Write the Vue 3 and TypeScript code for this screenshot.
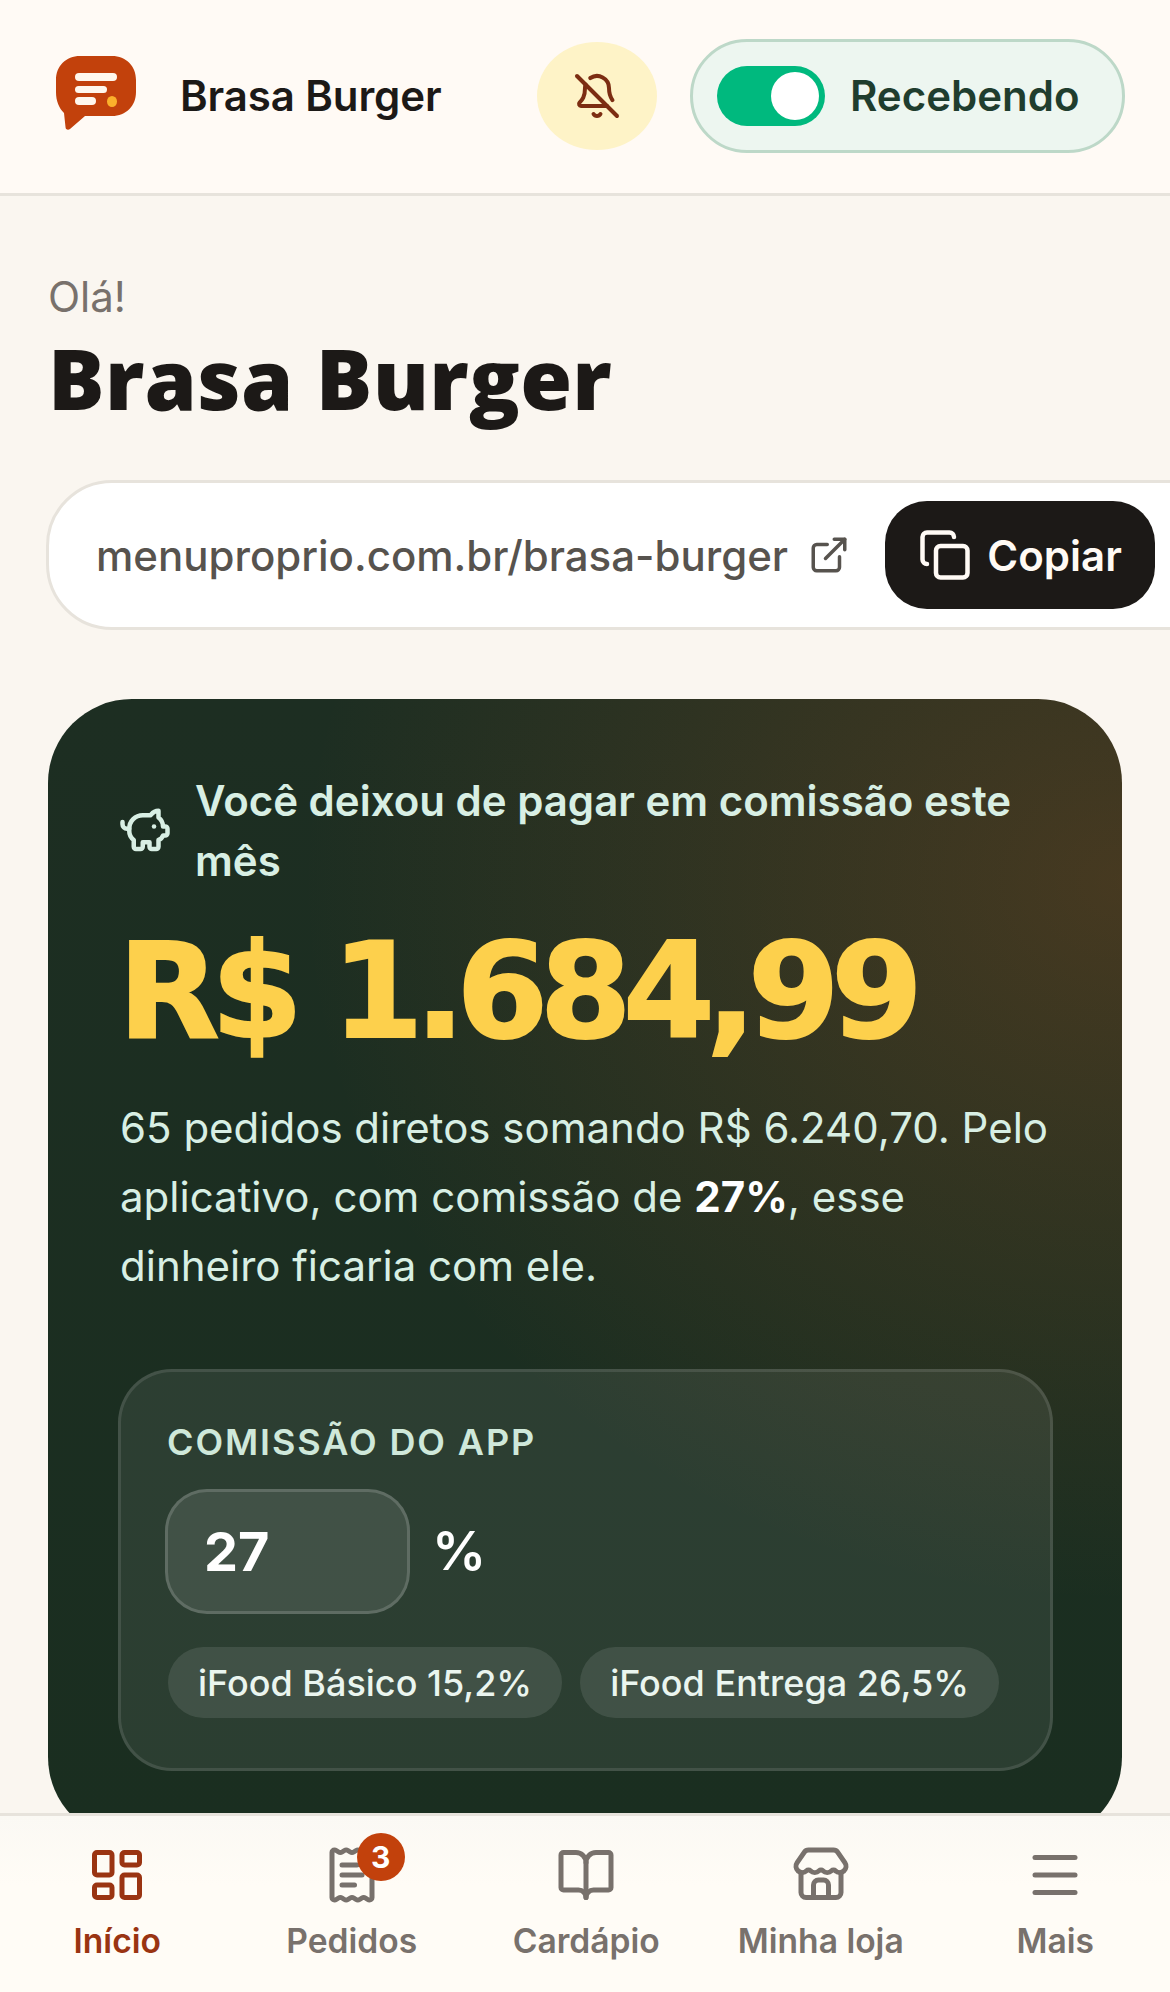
<script setup lang="ts">
interface NavItem { label: string; active?: boolean; badge?: number; key: string }
const nav: NavItem[] = [
  { key: 'home', label: 'Início', active: true },
  { key: 'orders', label: 'Pedidos', badge: 3 },
  { key: 'menu', label: 'Cardápio' },
  { key: 'store', label: 'Minha loja' },
  { key: 'more', label: 'Mais' },
]
const chips: string[] = ['iFood Básico 15,2%', 'iFood Entrega 26,5%']
</script>

<template>
  <div class="app">
    <header class="top">
      <svg class="logo" viewBox="0 0 80 74" aria-hidden="true">
        <path d="M24 0H56C70 0 80 10 80 24V36C80 50 70 60 56 60H29L14 73C12 74.500 9.500 73.500 9.500 71L8 57C3 52 0 45 0 36V24C0 10 10 0 24 0Z" fill="#c2410c" />
        <rect x="19" y="17" width="42" height="8" rx="4" fill="#fff7ed" />
        <rect x="19" y="30" width="32" height="7" rx="3.500" fill="#fff7ed" />
        <rect x="19" y="41" width="21" height="8" rx="4" fill="#fff7ed" />
        <ellipse cx="56" cy="45.500" rx="5" ry="5.500" fill="#fbb02c" />
      </svg>
      <span class="brand">Brasa Burger</span>
      <button class="bell">
        <svg viewBox="0 0 24 24" class="ico bell-ico">
          <path d="M10.268 21a2 2 0 0 0 3.464 0" />
          <path d="M17 17H4a1 1 0 0 1-.74-1.673C4.590 13.956 6 12.499 6 8a6 6 0 0 1 .258-1.742" />
          <path d="m2 2 20 20" />
          <path d="M8.668 3.010A6 6 0 0 1 18 8c0 2.687.77 4.653 1.707 6.050" />
        </svg>
      </button>
      <div class="status">
        <span class="switch"><span class="knob"></span></span>
        <span class="status-text">Recebendo</span>
      </div>
    </header>

    <main class="page">
      <p class="hello">Olá!</p>
      <h1 class="title">Brasa Burger</h1>

      <div class="linkbar">
        <span class="url">menuproprio.com.br/brasa-burger</span>
        <svg viewBox="0 0 24 24" class="ico ext-ico">
          <path d="M15 3h6v6" />
          <path d="M10 14 21 3" />
          <path d="M18 13v6a2 2 0 0 1-2 2H5a2 2 0 0 1-2-2V8a2 2 0 0 1 2-2h6" />
        </svg>
        <button class="copy">
          <svg viewBox="0 0 24 24" class="ico copy-ico">
            <rect x="8" y="8" width="14" height="14" rx="2" />
            <path d="M4 16c-1.100 0-2-.9-2-2V4c0-1.100.9-2 2-2h10c1.100 0 2 .9 2 2" />
          </svg>
          <span>Copiar</span>
        </button>
      </div>

      <section class="card">
        <div class="card-head">
          <svg viewBox="0 0 24 24" class="ico pig-ico">
            <path d="M11 17h3v2a1 1 0 0 0 1 1h2a1 1 0 0 0 1-1v-3a3.160 3.160 0 0 0 2-2h1a1 1 0 0 0 1-1v-2a1 1 0 0 0-1-1h-1a5 5 0 0 0-2-4V3a4 4 0 0 0-3.200 1.600l-.3.4H11a6 6 0 0 0-6 6v1a5 5 0 0 0 2 4v3a1 1 0 0 0 1 1h2a1 1 0 0 0 1-1z" />
            <path d="M16 10h.01" />
            <path d="M2 8v1a2 2 0 0 0 2 2h1" />
          </svg>
          <span>Você deixou de pagar em comissão este mês</span>
        </div>
        <div class="amount">R$ 1.684,99</div>
        <p class="desc">65 pedidos diretos somando R$ 6.240,70. Pelo aplicativo, com comissão de <strong>27%</strong>, esse dinheiro ficaria com ele.</p>

        <div class="panel">
          <div class="panel-label">COMISSÃO DO APP</div>
          <div class="rate">
            <div class="rate-input">27</div>
            <span class="rate-pct">%</span>
          </div>
          <div class="chips">
            <span v-for="c in chips" :key="c" class="chip">{{ c }}</span>
          </div>
        </div>
      </section>
    </main>

    <nav class="nav">
      <div v-for="item in nav" :key="item.key" class="nav-item" :class="{ active: item.active }">
        <span class="nav-icon">
          <svg viewBox="0 0 24 24" class="ico nav-svg">
            <template v-if="item.key === 'home'">
              <rect x="3" y="3" width="7" height="9" rx="1" />
              <rect x="14" y="3" width="7" height="5" rx="1" />
              <rect x="14" y="12" width="7" height="9" rx="1" />
              <rect x="3" y="16" width="7" height="5" rx="1" />
            </template>
            <template v-else-if="item.key === 'orders'">
              <path d="M4 3a1 1 0 0 1 1-1 1.300 1.300 0 0 1 .7.2l.933.6a1.300 1.300 0 0 0 1.400 0l.934-.6a1.300 1.300 0 0 1 1.400 0l.933.6a1.300 1.300 0 0 0 1.400 0l.933-.6a1.300 1.300 0 0 1 1.400 0l.934.6a1.300 1.300 0 0 0 1.400 0l.933-.6A1.300 1.300 0 0 1 19 2a1 1 0 0 1 1 1v18a1 1 0 0 1-1 1 1.300 1.300 0 0 1-.7-.2l-.933-.6a1.300 1.300 0 0 0-1.400 0l-.934.6a1.300 1.300 0 0 1-1.400 0l-.933-.6a1.300 1.300 0 0 0-1.400 0l-.933.6a1.300 1.300 0 0 1-1.400 0l-.934-.6a1.300 1.300 0 0 0-1.400 0l-.933.6a1.300 1.300 0 0 1-.7.2 1 1 0 0 1-1-1z" />
              <path d="M14 8H8" />
              <path d="M16 12H8" />
              <path d="M13 16H8" />
            </template>
            <template v-else-if="item.key === 'menu'">
              <path d="M12 7v14" />
              <path d="M3 18a1 1 0 0 1-1-1V4a1 1 0 0 1 1-1h5a4 4 0 0 1 4 4 4 4 0 0 1 4-4h5a1 1 0 0 1 1 1v13a1 1 0 0 1-1 1h-6a3 3 0 0 0-3 3 3 3 0 0 0-3-3z" />
            </template>
            <template v-else-if="item.key === 'store'">
              <path d="M15 21v-5a2 2 0 0 0-2-2h-2a2 2 0 0 0-2 2v5" />
              <path d="M17.774 10.310a1.120 1.120 0 0 0-1.549 0 2.500 2.500 0 0 1-3.451 0 1.120 1.120 0 0 0-1.548 0 2.500 2.500 0 0 1-3.452 0 1.120 1.120 0 0 0-1.549 0 2.500 2.500 0 0 1-3.770-3.248l2.889-4.184A2 2 0 0 1 7 2h10a2 2 0 0 1 1.653.873l2.895 4.192a2.500 2.500 0 0 1-3.774 3.244" />
              <path d="M4 10.950V19a2 2 0 0 0 2 2h12a2 2 0 0 0 2-2v-8.050" />
            </template>
            <template v-else>
              <path d="M4 5h16" />
              <path d="M4 12h16" />
              <path d="M4 19h16" />
            </template>
          </svg>
          <span v-if="item.badge" class="badge">{{ item.badge }}</span>
        </span>
        <span class="nav-label">{{ item.label }}</span>
      </div>
    </nav>
  </div>
</template>

<style>
html, body { margin: 0; padding: 0; background: #faf6f0; overflow: hidden; }
</style>

<style scoped>
.app {
  position: relative;
  width: 1170px;
  height: 1992px;
  overflow: hidden;
  background: #faf6f0;
  font-family: Inter, "Noto Sans", sans-serif;
  color: #1c1917;
}
.ico { fill: none; stroke: currentColor; stroke-width: 2; stroke-linecap: round; stroke-linejoin: round; display: block; flex: none; }

.top {
  box-sizing: border-box;
  height: 196px;
  display: flex;
  align-items: center;
  padding: 0 45px 2px 56px;
  background: #fffaf5;
  border-bottom: 3px solid #e7e3dc;
}
.logo { width: 80px; height: 74px; flex: none; margin-top: -5px; }
.brand { margin-left: 44px; font-size: 42px; font-weight: 600; letter-spacing: -0.1px; }
.bell {
  margin-left: auto;
  width: 120px;
  height: 108px;
  border: 0;
  border-radius: 50%;
  background: #fef3c7;
  color: #7c2d12;
  display: flex;
  align-items: center;
  justify-content: center;
  padding: 0;
}
.bell-ico { width: 48px; height: 48px; }
.status {
  box-sizing: border-box;
  margin-left: 33px;
  width: 435px;
  height: 114px;
  display: flex;
  align-items: center;
  gap: 25px;
  padding-left: 24px;
  background: #edf6f0;
  border: 3px solid #bdd8c8;
  border-radius: 57px;
}
.switch {
  box-sizing: border-box;
  width: 108px;
  height: 60px;
  padding: 6px;
  background: #00b97e;
  border-radius: 30px;
  display: flex;
  justify-content: flex-end;
}
.knob { width: 48px; height: 48px; border-radius: 50%; background: #fff; }
.status-text { font-size: 42px; font-weight: 600; color: #1f3d2e; }

.page { padding: 78px 48px 0; }
.hello { margin: 0; font-size: 42px; line-height: 46px; color: #78716c; }
.title { margin: 8px 0 0; font-family: "Open Sans", Inter, sans-serif; font-size: 84px; line-height: 100px; font-weight: 800; letter-spacing: 0.3px; }

.linkbar {
  box-sizing: border-box;
  margin: 52px 0 0 -2px;
  width: 1190px;
  height: 150px;
  display: flex;
  align-items: center;
  padding-left: 47px;
  background: #fff;
  border: 3px solid #e7e3dc;
  border-radius: 66px;
}
.url { font-size: 42px; font-weight: 500; color: #57534e; white-space: nowrap; }
.ext-ico { width: 42px; height: 42px; margin-left: 20px; color: #57534e; }
.copy {
  margin-left: 35px;
  width: 270px;
  height: 108px;
  border: 0;
  border-radius: 42px;
  background: #1c1917;
  color: #fffaf5;
  font: 600 42px Inter, sans-serif;
  display: flex;
  align-items: center;
  justify-content: center;
  gap: 15px;
  padding: 0;
}
.copy-ico { width: 54px; height: 54px; }

.card {
  box-sizing: border-box;
  margin-top: 69px;
  width: 1074px;
  padding: 72px 70px 70px;
  border-radius: 84px;
  color: #d8efe4;
  background:
    radial-gradient(ellipse 820px 720px at 100% 16%, rgba(190, 90, 30, 0.26), rgba(190, 90, 30, 0) 100%),
    linear-gradient(180deg, #1d2e22, #1a2e20);
}
.card-head { display: flex; align-items: center; gap: 23px; font-size: 42px; line-height: 60px; font-weight: 600; }
.pig-ico { width: 54px; height: 54px; }
.amount {
  margin: 20px 0 0 0;
  font-family: "DejaVu Sans", Inter, sans-serif;
  font-size: 132px;
  line-height: 160px;
  font-weight: 700;
  color: #fdd04c;
  letter-spacing: -8.6px;
  -webkit-text-stroke: 2px #fdd04c;
  white-space: nowrap;
}
.desc { margin: 22px 0 0; padding-left: 2px; font-size: 42px; line-height: 69px; }
.desc strong { color: #fff; font-weight: 700; }

.panel {
  box-sizing: border-box;
  margin: 69px 0 0;
  width: 935px;
  height: 402px;
  padding: 48px 48px 0;
  border-radius: 54px;
  background: rgba(255, 255, 255, 0.08);
  border: 3px solid rgba(255, 255, 255, 0.11);
}
.panel-label { margin-left: -2px; font-size: 36px; line-height: 44px; font-weight: 600; letter-spacing: 1.9px; color: #cfe8da; }
.rate { margin-top: 25px; margin-left: -4px; display: flex; align-items: center; gap: 22px; }
.rate-input {
  box-sizing: border-box;
  width: 245px;
  height: 125px;
  padding-left: 36px;
  display: flex;
  align-items: center;
  font-size: 54px;
  font-weight: 700;
  color: #fff;
  background: rgba(255, 255, 255, 0.1);
  border: 3px solid rgba(255, 255, 255, 0.16);
  border-radius: 42px;
}
.rate-pct { font-size: 54px; font-weight: 600; color: #fff; margin-top: -3px; }
.chips { margin: 33px 0 0 -1px; display: flex; gap: 18px; }
.chip {
  height: 71px;
  display: flex;
  align-items: center;
  padding: 0 30px;
  border-radius: 36px;
  background: rgba(255, 255, 255, 0.1);
  font-size: 36px;
  font-weight: 500;
  color: #eaf5ef;
  white-space: nowrap;
}

.nav {
  position: absolute;
  left: 0;
  right: 0;
  bottom: 0;
  height: 179px;
  box-sizing: border-box;
  display: grid;
  grid-template-columns: repeat(5, 234.5px);
  background: linear-gradient(180deg, #fbf9f4, #fffcf6 40%);
  border-top: 3px solid #e7e3dc;
  padding-top: 29px;
}
.nav-item { display: flex; flex-direction: column; align-items: center; color: #78716c; }
.nav-item.active { color: #9a3412; }
.nav-icon { position: relative; display: block; width: 60px; height: 60px; }
.nav-svg { width: 60px; height: 60px; }
.badge {
  position: absolute;
  top: -12px;
  left: 35px;
  width: 48px;
  height: 48px;
  border-radius: 50%;
  background: #c2410c;
  color: #fff;
  font-size: 30px;
  font-weight: 700;
  display: flex;
  align-items: center;
  justify-content: center;
}
.nav-label { margin-top: 13px; font-size: 33.6px; line-height: 46px; font-weight: 600; white-space: nowrap; }
</style>
